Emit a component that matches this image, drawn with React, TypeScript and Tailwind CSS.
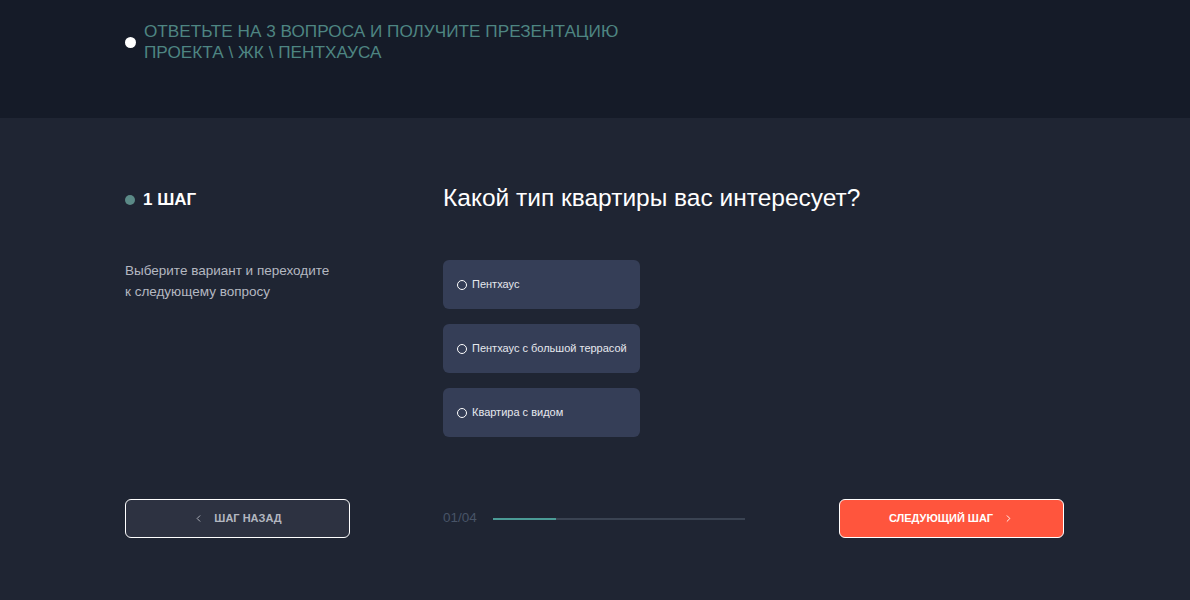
import { ChevronLeft, ChevronRight } from "lucide-react";

// Варианты ответа на первый шаг
const options = ["Пентхаус", "Пентхаус с большой террасой", "Квартира с видом"];

export default function App() {
  return (
    <div
      className="w-[1190px] h-[600px] bg-[#1f2533] flex flex-col overflow-hidden"
      style={{ fontFamily: '"Liberation Sans", Arial, sans-serif' }}
    >
      {/* Шапка */}
      <div className="h-[118px] bg-[#151b28] flex items-start pl-[125px] pt-[21px]">
        <div className="flex items-center gap-[8px]">
          <span className="w-[11px] h-[11px] rounded-full bg-white shrink-0" />
          <p className="text-[17.2px] leading-[21px] text-[#4e8582] uppercase">
            Ответьте на 3 вопроса и получите презентацию
            <br />
            проекта \ ЖК \ пентхауса
          </p>
        </div>
      </div>

      {/* Контент */}
      <div className="flex-1 flex flex-col pl-[125px] pr-[126px] pt-[70px]">
        <div className="flex">
          <div className="w-[318px] shrink-0">
            <div className="flex items-center gap-[8px] h-[22px] mt-[1px]">
              <span className="w-[10px] h-[10px] rounded-full bg-[#5b8a87]" />
              <span className="text-[17px] font-semibold text-white">1 ШАГ</span>
            </div>
            <p className="mt-[49px] text-[13.5px] leading-[21px] text-[#b4b8c1]">
              Выберите вариант и переходите
              <br />к следующему вопросу
            </p>
          </div>
          <div className="flex flex-col">
            <h1 className="text-[24.5px] leading-[28px] font-light text-white -mt-[4px]">
              Какой тип квартиры вас интересует?
            </h1>
            <div className="mt-[48px] flex flex-col gap-[15px]">
              {options.map((o) => (
                <div
                  key={o}
                  className="w-[197px] h-[49px] rounded-[6px] bg-[#353e57] flex items-center gap-[5px] pl-[14px]"
                >
                  <span className="w-[10px] h-[10px] rounded-full border border-white shrink-0" />
                  <span className="text-[11px] text-[#e6e8ee]">{o}</span>
                </div>
              ))}
            </div>
          </div>
        </div>

        {/* Низ: кнопки и прогресс */}
        <div className="mt-[62px] flex items-center">
          <button className="w-[225px] h-[39px] rounded-[6px] border-[1.5px] border-white bg-[#2d3241] flex items-center justify-center gap-[10px] text-[11px] font-bold text-[#b3b7c0]">
            <ChevronLeft className="w-[11px] h-[11px]" strokeWidth={2} />
            ШАГ НАЗАД
          </button>
          <div className="ml-[93px] flex items-center gap-[16px]">
            <span className="text-[13.5px] text-[#485467]">01/04</span>
            <div className="w-[252px] h-[2px] bg-[#3a4352] flex">
              <div className="w-[63px] h-full bg-[#4b9b96]" />
            </div>
          </div>
          <button className="ml-auto w-[225px] h-[39px] rounded-[6px] border-[1.5px] border-white bg-[#ff553d] flex items-center justify-center gap-[10px] text-[11px] font-bold text-white">
            СЛЕДУЮЩИЙ ШАГ
            <ChevronRight className="w-[11px] h-[11px]" strokeWidth={2} />
          </button>
        </div>
      </div>
    </div>
  );
}
